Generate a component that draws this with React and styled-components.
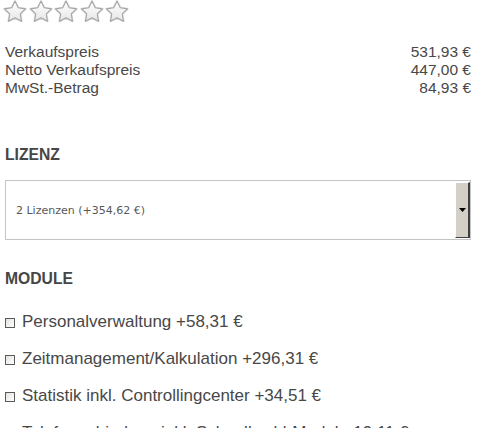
import React from "react";
import styled, { createGlobalStyle } from "styled-components";

const Global = createGlobalStyle`
  html, body { margin: 0; padding: 0; background: #fff; }
  body { font-family: "Liberation Sans", Arial, sans-serif; color: #484848; }
`;

const Page = styled.div`
  width: 466px;
  padding: 0 21px 0 5px;
  display: flex;
  flex-direction: column;
`;

const Stars = styled.div`
  display: flex;
  gap: 1.5px;
  height: 21px;
  margin-left: -2px;
`;

const PriceTable = styled.div`
  margin-top: 22px;
  display: flex;
  flex-direction: column;
  font-size: 15.5px;
  line-height: 18px;
`;

const PriceRow = styled.div`
  display: flex;
  justify-content: space-between;
`;

const Heading = styled.h3`
  margin: ${(p) => p.$top}px 0 0;
  font-size: 15.7px;
  line-height: 18px;
  font-weight: bold;
  color: #464646;
`;

const Select = styled.div`
  margin-top: 16px;
  height: 58px;
  border: 1px solid #c4c4c4;
  display: flex;
  align-items: stretch;
  background: #fff;
`;

const SelectText = styled.div`
  flex: 1;
  display: flex;
  align-items: center;
  padding-left: 10px;
  font-family: "DejaVu Sans", Verdana, sans-serif;
  font-size: 11px;
  color: #585858;
`;

const SelectButton = styled.div`
  width: 12px;
  margin-top: 1px;
  margin-bottom: 1px;
  background: #d4d0c8;
  border-left: 1px solid #fff;
  border-top: 1px solid #fff;
  border-right: 2px solid #404040;
  border-bottom: 1px solid #404040;
  display: flex;
  align-items: center;
  justify-content: center;
`;

const Modules = styled.div`
  margin-top: 24px;
  display: flex;
  flex-direction: column;
  gap: 17px;
`;

const ModuleRow = styled.label`
  display: flex;
  align-items: center;
  gap: 7px;
  font-size: 17px;
  line-height: 20px;
  color: #484848;
`;

const Box = styled.span`
  width: 8px;
  height: 8px;
  border: 1px solid #5a5a5a;
  background: linear-gradient(135deg, #e4e2dc, #fff);
  margin-top: 1px;
  flex: none;
`;

const Star = () => (
  <svg width="24" height="22" viewBox="0.6 0.6 22.8 21">
    <defs>
      <linearGradient id="sg" x1="0" y1="0" x2="0" y2="1">
        <stop offset="0" stopColor="#ffffff" />
        <stop offset="1" stopColor="#e6e6e6" />
      </linearGradient>
    </defs>
    <path
      d="M12 1.8l3.09 6.26 6.91 1.01-5 4.87 1.18 6.88L12 17.57l-6.18 3.25 1.18-6.88-5-4.87 6.91-1.01L12 1.8z"
      fill="url(#sg)"
      stroke="#dcdcdc"
      strokeWidth="2.2"
      strokeLinejoin="round"
    />
    <path
      d="M12 1.8l3.09 6.26 6.91 1.01-5 4.87 1.18 6.88L12 17.57l-6.18 3.25 1.18-6.88-5-4.87 6.91-1.01L12 1.8z"
      fill="url(#sg)"
      stroke="#a4a4a4"
      strokeWidth="1"
      strokeLinejoin="round"
    />
  </svg>
);

const prices = [
  ["Verkaufspreis", "531,93 €"],
  ["Netto Verkaufspreis", "447,00 €"],
  ["MwSt.-Betrag", "84,93 €"],
];

const modules = [
  "Personalverwaltung +58,31 €",
  "Zeitmanagement/Kalkulation +296,31 €",
  "Statistik inkl. Controllingcenter +34,51 €",
  "Telefonanbindung inkl. Schnellwahl-Modul +19,11 €",
];

export default function App() {
  return (
    <>
      <Global />
      <Page>
        <Stars>
          {[0, 1, 2, 3, 4].map((i) => (
            <Star key={i} />
          ))}
        </Stars>
        <PriceTable>
          {prices.map(([l, v]) => (
            <PriceRow key={l}>
              <span>{l}</span>
              <span>{v}</span>
            </PriceRow>
          ))}
        </PriceTable>
        <Heading $top={49}>LIZENZ</Heading>
        <Select>
          <SelectText>2 Lizenzen (+354,62 €)</SelectText>
          <SelectButton>
            <svg width="7" height="4" viewBox="0 0 7 4">
              <path d="M0 0h7L3.5 4z" fill="#000" />
            </svg>
          </SelectButton>
        </Select>
        <Heading $top={30}>MODULE</Heading>
        <Modules>
          {modules.map((m) => (
            <ModuleRow key={m}>
              <Box />
              <span>{m}</span>
            </ModuleRow>
          ))}
        </Modules>
      </Page>
    </>
  );
}
